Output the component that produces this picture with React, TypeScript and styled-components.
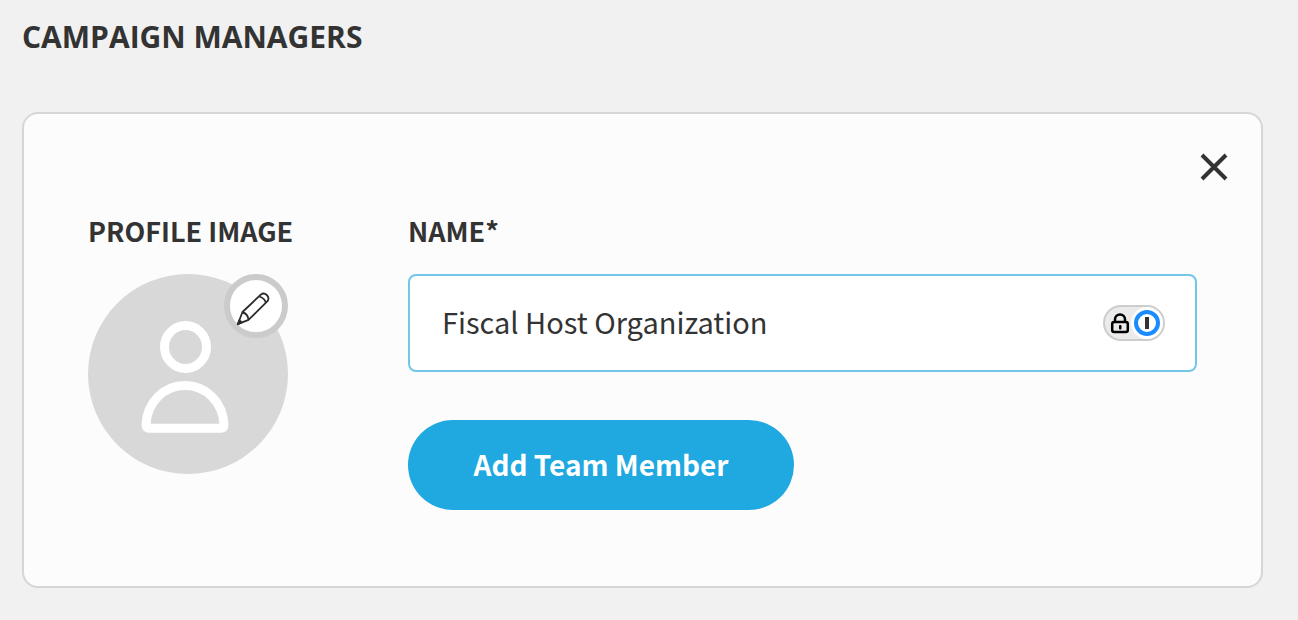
import React, { useState } from "react";
import styled, { createGlobalStyle } from "styled-components";

const bodyFont = `"Source Sans Pro", "Noto Sans CJK SC", "Noto Sans", sans-serif`;

const GlobalStyle = createGlobalStyle`
  *, *::before, *::after { box-sizing: border-box; }
  body {
    margin: 0;
    background: #f1f1f1;
    color: #333;
    font-family: ${bodyFont};
  }
  button, input { font: inherit; color: inherit; }
`;

const Page = styled.main`
  padding: 17px 35px 32px 22px;
`;

const Heading = styled.h1`
  margin: 0 0 55px;
  font: 700 30px/40px "Open Sans", "Noto Sans", sans-serif;
  text-transform: uppercase;
`;

const Card = styled.section`
  background: #fcfcfc;
  border: 2px solid #d6d6d6;
  border-radius: 16px;
`;

const CardHeader = styled.header`
  display: flex;
  justify-content: flex-end;
  padding: 33px 27px 0;
`;

const CloseButton = styled.button`
  display: grid;
  place-items: center;
  width: 40px;
  height: 40px;
  padding: 0;
  border: 0;
  background: none;
  cursor: pointer;
`;

const CardBody = styled.div`
  display: flex;
  gap: 120px;
  padding: 26px 64px 76px;
`;

const Column = styled.div<{ $fill?: boolean }>`
  display: flex;
  flex-direction: column;
  align-items: flex-start;
  gap: 25px;
  min-width: 0;
  flex: ${(p) => (p.$fill ? "1" : "0 0 200px")};
`;

const Label = styled.label`
  font-size: 27px;
  line-height: 36px;
  font-weight: 700;
  text-transform: uppercase;
  white-space: nowrap;
`;

const Avatar = styled.div`
  position: relative;
  width: 200px;
  height: 200px;
  border-radius: 50%;
  background: #d8d8d8;
`;

const EditButton = styled.button`
  position: absolute;
  top: 0;
  right: 0;
  width: 64px;
  height: 64px;
  padding: 0;
  border: 6px solid #cbcbcb;
  border-radius: 50%;
  background: #fff;
  cursor: pointer;
`;

const Icon = styled.svg`
  display: block;
  fill: none;
`;

const InputFrame = styled.div`
  display: flex;
  align-items: center;
  gap: 16px;
  width: 100%;
  height: 98px;
  padding: 0 30px 0 32px;
  border: 2px solid #72c7e7;
  border-radius: 8px;
  background: #fff;
`;

const TextInput = styled.input`
  flex: 1;
  min-width: 0;
  height: 48px;
  padding: 0 0 4px;
  border: 0;
  outline: 0;
  background: none;
  font-size: 29px;
`;

const VaultButton = styled.button`
  width: 62px;
  height: 36px;
  padding: 0;
  border: 0;
  background: none;
  cursor: pointer;
`;

const PrimaryButton = styled.button`
  min-width: 386px;
  height: 90px;
  margin-top: 23px;
  padding: 0 64px 2px;
  border: 0;
  border-radius: 45px;
  background: #20a8e0;
  color: #fff;
  font-size: 28px;
  font-weight: 700;
  cursor: pointer;
`;

export default function App() {
  const [name, setName] = useState("Fiscal Host Organization");
  return (
    <>
      <GlobalStyle />
      <Page>
        <Heading>Campaign Managers</Heading>
        <Card>
          <CardHeader>
            <CloseButton type="button" aria-label="Remove">
              <Icon width="28" height="28" viewBox="0 0 28 28" stroke="#333" strokeWidth="4">
                <path d="M2 2 26 26M26 2 2 26" />
              </Icon>
            </CloseButton>
          </CardHeader>
          <CardBody>
            <Column>
              <Label htmlFor="profile-image">Profile Image</Label>
              <Avatar>
                <Icon width="200" height="200" viewBox="0 0 200 200" stroke="#fff" strokeWidth="9" strokeLinejoin="round">
                  <ellipse cx="97.5" cy="73" rx="21" ry="21.5" />
                  <path d="M61 154.300H133Q136 154.300 136 151C135 128 118 111.500 97 111.500S59 128 58 151Q58 154.300 61 154.300Z" />
                </Icon>
                <EditButton id="profile-image" type="button">
                  <Icon width="52" height="52" viewBox="0 0 52 52" stroke="#2b2b2b" strokeWidth="1.800" strokeLinejoin="round">
                    <path d="M7.800 44.200 12.500 32 30.800 14.600C34.800 11.600 40.500 16.500 37.500 21.200L18.500 39.800Z" />
                    <path d="M12.500 32.500C15.500 33 18 36 18.500 39.500M29.500 16.500C32.500 17.500 35.200 20 36 23" />
                    <path d="M7.800 44.200 9.300 40.200 11.600 42.500Z" fill="#2b2b2b" />
                  </Icon>
                </EditButton>
              </Avatar>
            </Column>
            <Column $fill>
              <Label htmlFor="name">Name*</Label>
              <InputFrame>
                <TextInput id="name" type="text" value={name} onChange={(e) => setName(e.target.value)} />
                <VaultButton type="button" aria-label="Fill from password manager">
                  <Icon width="62" height="36" viewBox="0 0 62 36">
                    <rect x="1" y="1" width="60" height="34" rx="17" fill="#ebebeb" stroke="#cdcdcd" strokeWidth="2" />
                    <circle cx="44" cy="18" r="16" fill="#fff" />
                    <circle cx="44" cy="18" r="11" stroke="#1a8cff" strokeWidth="4" />
                    <rect x="42" y="12" width="4" height="12" fill="#333" />
                    <rect x="9.200" y="17" width="15.600" height="10" rx="2" stroke="#000" strokeWidth="2.500" />
                    <path d="M12 17V14.500a5 5 0 0 1 10 0V17" stroke="#000" strokeWidth="2.500" />
                    <rect x="16" y="20" width="2.500" height="4.500" rx="1" fill="#000" />
                  </Icon>
                </VaultButton>
              </InputFrame>
              <PrimaryButton type="button">Add Team Member</PrimaryButton>
            </Column>
          </CardBody>
        </Card>
      </Page>
    </>
  );
}
